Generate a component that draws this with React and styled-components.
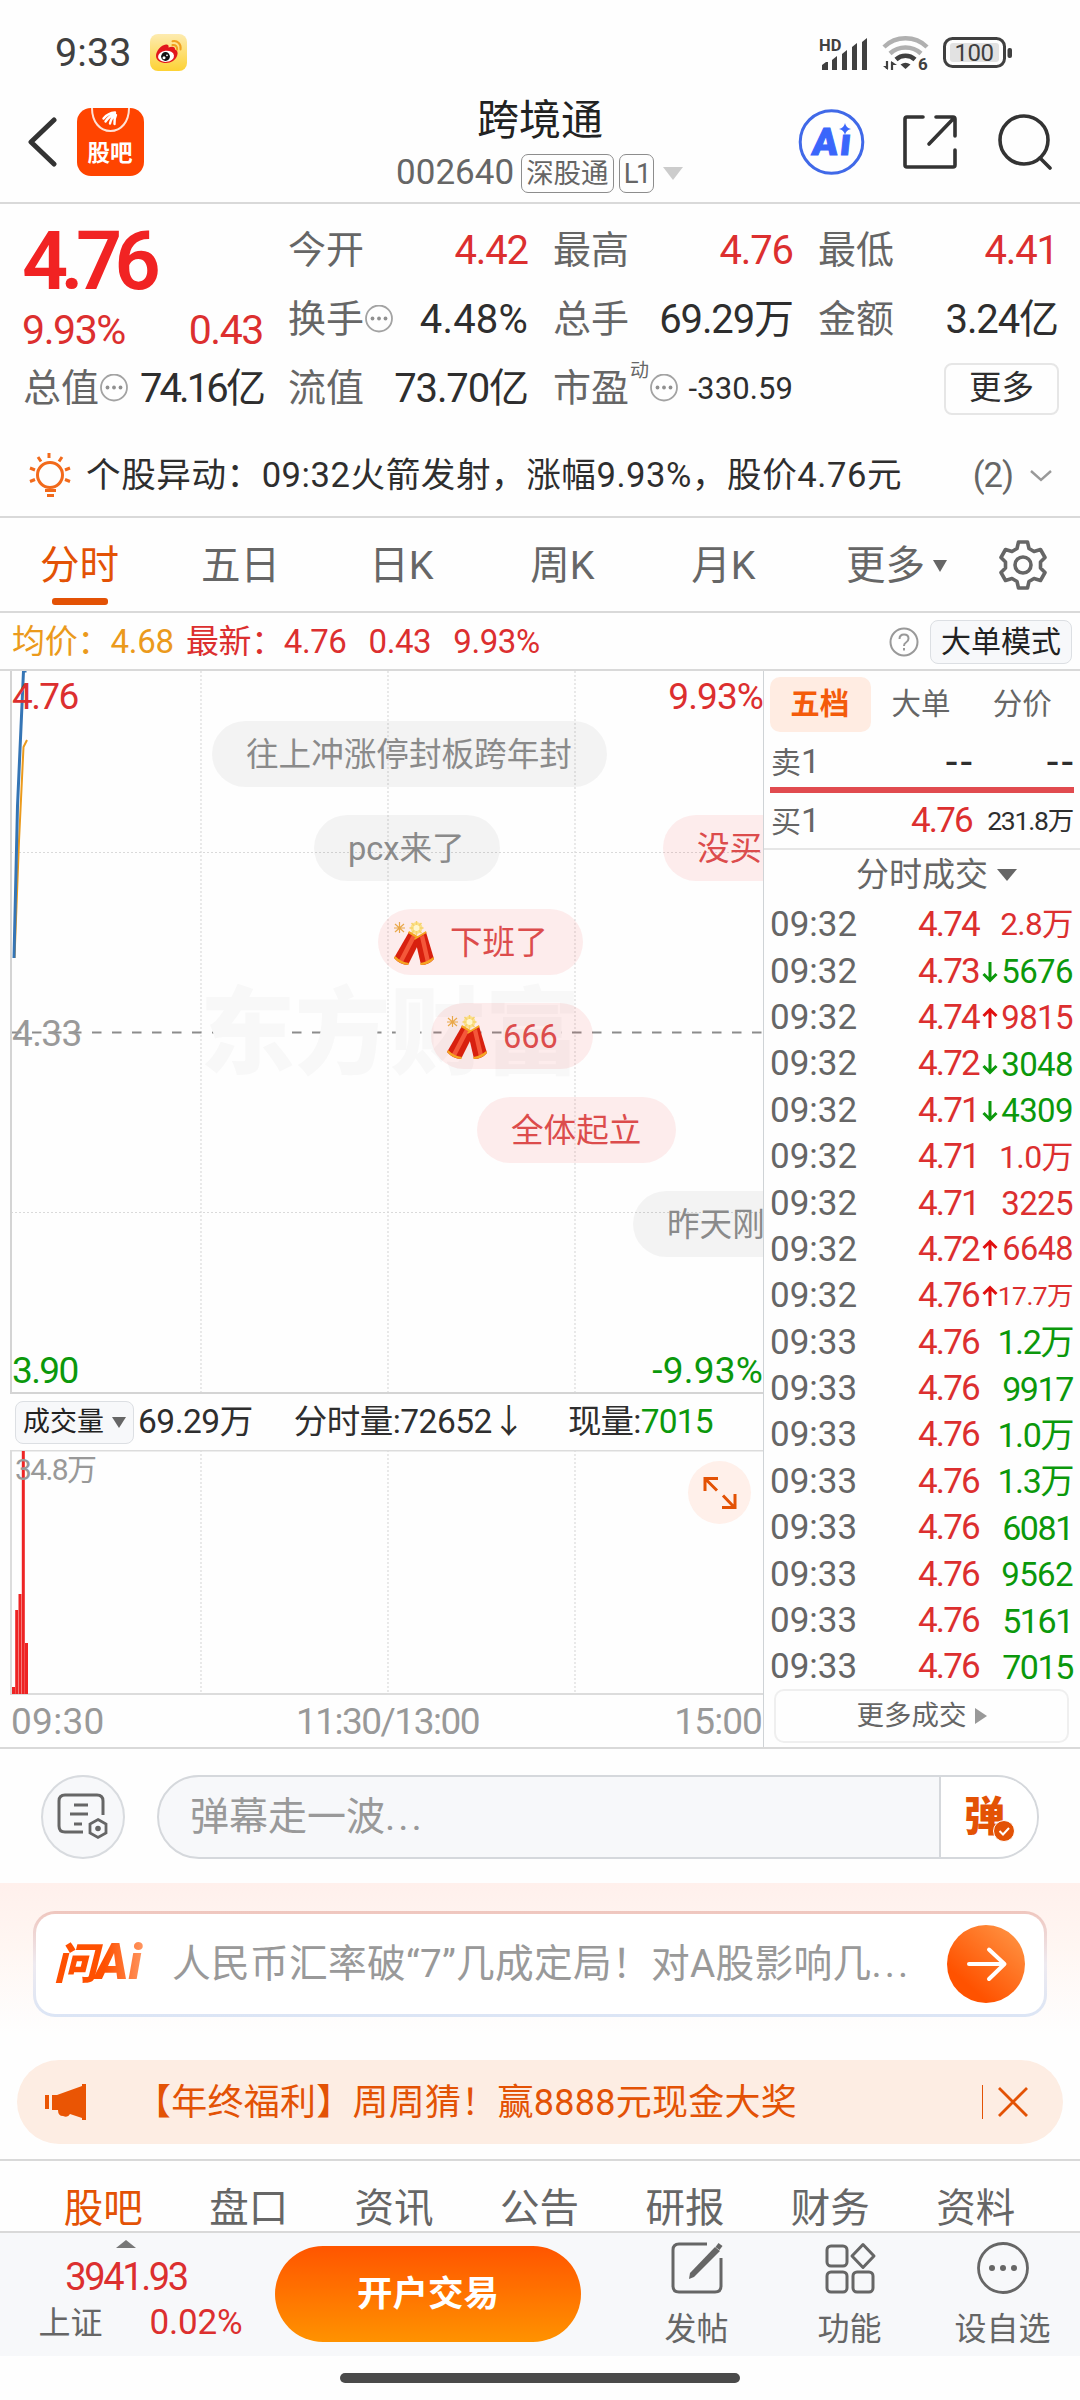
import React, { useState } from 'react';
import styled, { createGlobalStyle } from 'styled-components';

const red = '#dc2f2f';
const green = '#0b980b';
const orange = '#e35205';
const dark = '#2e2e2e';
const gray = '#666666';
const line = '#d9d9d9';

const GlobalStyle = createGlobalStyle`
    * { box-sizing: border-box; }

    body {
        margin: 0;
        background-color: #fff;
        font-family: Roboto, "Noto Sans CJK SC", sans-serif;
        line-height: 1.2;
        color: ${dark};
    }

    svg { display: block; flex-shrink: 0; }
`;

const Page = styled.main`
    display: flex;
    flex-direction: column;
    width: 1080px;
    height: 2400px;
    overflow: hidden;
    background-color: #fefefe;
    white-space: nowrap;
`;

const Text = styled.span`
    font-size: ${p => p.$size}px;
    color: ${p => p.$color || 'inherit'};
    letter-spacing: ${p => p.$ls || 0}px;
`;

const Dotted = styled.span`
    letter-spacing: 3px;
`;

/* status bar */

const StatusBar = styled.div`
    display: flex;
    align-items: center;
    height: 84px;
    padding: 21px 67px 0 55px;
    color: #404040;

    .weibo { margin-left: 18px; margin-right: auto; }
    .wifi { margin: 0 11px 0 12px; }
`;

/* header */

const Header = styled.header`
    display: grid;
    grid-template-columns: 282px 516px 282px;
    height: 120px;
    border-bottom: 2px solid ${line};
`;

const HeaderSide = styled.div`
    display: flex;
    align-items: center;
    padding: ${p => p.$right ? '0 27px 3px 0' : '0 0 3px 26px'};
    justify-content: ${p => p.$right ? 'space-between' : 'flex-start'};
    gap: 20px;

    .share { margin-right: 4px; }
`;

const TitleBlock = styled.div`
    display: flex;
    flex-direction: column;
    align-items: center;
    padding-top: 12px;
`;

const Title = styled.h1`
    margin: 0;
    font-size: 42px;
    line-height: 50px;
    font-weight: 400;
    color: #222;
`;

const CodeRow = styled.div`
    display: flex;
    align-items: center;
    height: 44px;
    margin-top: 5px;
    padding-right: 1px;
    color: ${gray};
`;

const Badge = styled.span`
    height: 39px;
    margin-left: 7px;
    padding: 0 4px;
    border: 1.5px solid #8d8d8d;
    border-radius: 7px;
    font-size: 27.5px;
    line-height: 37px;
    letter-spacing: ${p => p.$ls || 0}px;

    & + & { margin-left: 5px; }
`;

const Triangle = styled.i`
    width: 0;
    height: 0;
    margin-left: ${p => p.$ml || 0}px;
    border-style: solid;
    border-color: transparent;
    border-width: ${p => p.$right ? `${p.$w / 2}px 0 ${p.$w / 2}px ${p.$h}px` : `${p.$h}px ${p.$w / 2}px 0`};
    ${p => p.$right ? 'border-left-color' : 'border-top-color'}: ${p => p.$color || gray};
    transform: ${p => p.$up ? 'rotate(180deg)' : 'none'};
`;

/* quote */

const Quote = styled.section`
    display: grid;
    grid-template-columns: 240px 240px 240px 240px;
    grid-template-rows: repeat(3, 69px);
    column-gap: 25px;
    padding: 12px 0 0 23px;
`;

const PriceCell = styled.div`
    grid-row: span 2;
    display: flex;
    flex-direction: column;
    color: ${red};
`;

const BigPrice = styled.strong`
    margin: 10px 0 0 -1px;
    height: 71px;
    font-size: 81px;
    line-height: 71px;
    letter-spacing: -7.7px;
    font-weight: 600;
    color: #f12323;
`;

const Change = styled.div`
    display: flex;
    justify-content: space-between;
    margin: 13px 0 0 -1px;
    font-size: 41px;
    line-height: 40px;
    letter-spacing: -1.4px;
`;

const Cell = styled.div`
    display: flex;
    align-items: center;
    justify-content: ${p => p.$end ? 'flex-end' : 'flex-start'};
    font-size: 40px;
    letter-spacing: ${p => p.$ls || -1.1}px;
    color: ${p => p.$color || dark};

    > b {
        font-size: 38px;
        font-weight: 400;
        letter-spacing: 0;
        color: ${gray};
    }

    > sup {
        align-self: flex-start;
        margin: 4px 0 0 1px;
        font-size: 19px;
        letter-spacing: 0;
        line-height: 26px;
        color: ${gray};
    }

    > span { margin-left: auto; }
`;

const MoreButton = styled.button`
    width: 115px;
    height: 52px;
    margin-right: -1px;
    padding: 0;
    border: 2px solid #e6e6e6;
    border-radius: 8px;
    background: none;
    font: inherit;
    font-size: 32.5px;
    letter-spacing: 0;
    color: ${dark};
`;

const Alert = styled.section`
    display: flex;
    align-items: center;
    height: 95px;
    padding: 12px 28px 0 28px;
    border-bottom: 2px solid ${line};
    font-size: 34.6px;
    letter-spacing: 0.55px;

    p { margin: 0 auto 0 14px; }
    span { color: ${gray}; margin-right: 17px; }
`;

/* tabs */

const Tabs = styled.nav`
    display: flex;
    height: 95px;
    border-bottom: 2px solid ${line};
`;

const Tab = styled.button`
    position: relative;
    display: flex;
    align-items: center;
    justify-content: center;
    width: ${p => p.$w || 161}px;
    padding: 2px 2px 0 0;
    border: none;
    background: none;
    font: inherit;
    font-size: 39.5px;
    color: ${p => p.$active ? orange : gray};

    &::after {
        content: "";
        display: ${p => p.$active ? 'block' : 'none'};
        position: absolute;
        bottom: 6px;
        width: 56px;
        height: 7px;
        border-radius: 3px;
        background-color: ${orange};
    }
`;

const InfoBar = styled.div`
    display: flex;
    align-items: center;
    height: 58px;
    padding: 2px 8px 0 12px;
    border-bottom: 2px solid ${line};
    font-size: 33px;
    letter-spacing: -0.2px;
    color: ${red};

    .avg { color: #eb9a1c; margin-right: 12px; }
    .price { letter-spacing: -0.4px; }
    .gap { margin-left: 22px; letter-spacing: -0.4px; }
    svg { margin: 0 11px 0 auto; }
`;

const SmallButton = styled.button`
    display: flex;
    align-items: center;
    justify-content: center;
    flex-shrink: 0;
    width: ${p => p.$w}px;
    height: ${p => p.$h}px;
    padding: 0;
    border: 1.5px solid #dcdfe3;
    border-radius: 8px;
    background-color: #f7f8fa;
    font: inherit;
    font-size: ${p => p.$size}px;
    letter-spacing: 0;
    color: #222;
`;

/* charts */

const Body = styled.section`
    display: grid;
    grid-template-columns: 764px 316px;
    height: 1078px;
    border-bottom: 2px solid ${line};
`;

const Charts = styled.div`
    display: flex;
    flex-direction: column;
    border-right: 1.5px solid #cfd3d6;
`;

const PriceChart = styled.div`
    position: relative;
    height: 723px;
    overflow: hidden;
`;

const Label = styled.span`
    position: absolute;
    ${p => p.$right ? 'right: 0' : `left: ${p.$left || 12}px`};
    top: ${p => p.$top}px;
    font-size: ${p => p.$size || 37}px;
    line-height: 40px;
    letter-spacing: ${p => p.$ls || -1.6}px;
    color: ${p => p.$color};
`;

const Watermark = styled.span`
    position: absolute;
    left: 200px;
    top: 307px;
    font-size: 95px;
    line-height: 114px;
    font-weight: 900;
    color: #f8f8f8;
`;

const Bullet = styled.div`
    position: absolute;
    left: ${p => p.$x}px;
    top: ${p => 50 + p.$row * 94}px;
    display: flex;
    align-items: center;
    height: 66px;
    padding: 3px ${p => p.$cracker ? '35px 0 13px' : '35px 0 34px'};
    border-radius: 33px;
    background-color: ${p => p.$hot ? 'rgba(240, 60, 60, 0.095)' : 'rgba(0, 0, 0, 0.045)'};
    color: ${p => p.$hot ? '#dc4c4c' : '#8a8a8a'};
    font-size: 32.6px;

    svg { margin-right: 15px; }
`;

const VolumeBar = styled.div`
    display: flex;
    align-items: center;
    height: 56px;
    padding: 0 0 0 15px;
    font-size: 33.5px;
    letter-spacing: -0.5px;

    em { font-style: normal; color: ${green}; }
    .total { margin-left: 4px; }
    .minute { margin-left: 41px; }
    .now { margin-left: 43px; letter-spacing: -0.8px; }
`;

const VolumeChart = styled.div`
    position: relative;
    height: 244px;
`;

const ExpandButton = styled.button`
    position: absolute;
    right: 12px;
    top: 11px;
    width: 63px;
    height: 63px;
    padding: 0;
    border: none;
    border-radius: 50%;
    background-color: #fff0ea;
`;

const TimeAxis = styled.div`
    display: flex;
    justify-content: space-between;
    align-items: center;
    flex: 1;
    padding: 3px 1px 0 11px;
    font-size: 37px;
    letter-spacing: -0.9px;
    color: #999;

    > :first-child { letter-spacing: 0.3px; }
    > :nth-child(2) { margin-right: 4px; letter-spacing: -1.5px; }
`;

/* order book */

const Book = styled.div`
    display: flex;
    flex-direction: column;
    padding: 6px 6px 0;
`;

const BookTabs = styled.div`
    display: grid;
    grid-template-columns: repeat(3, 1fr);
    height: 55px;
`;

const BookTab = styled.button`
    padding: 1px 2px 0 0;
    border: none;
    border-radius: 10px;
    background-color: ${p => p.$active ? '#ffece2' : 'transparent'};
    font: inherit;
    font-size: 29.5px;
    font-weight: ${p => p.$active ? 700 : 400};
    color: ${p => p.$active ? '#f45b0a' : gray};
`;

const Level = styled.div`
    display: grid;
    grid-template-columns: 1fr 90px 101px;
    align-items: center;
    height: 55px;
    padding: ${p => p.$top || 0}px 1px 0;
    font-size: 35px;
    text-align: right;

    > :first-child { text-align: left; font-size: 30px; color: ${gray}; }
    > :first-child b { font-size: 34px; font-weight: 400; }
    > .dash { margin-right: -3px; font-size: 42px; line-height: 30px; letter-spacing: 3px; }
`;

const Pressure = styled.div`
    height: 6px;
    background-color: #e14b4f;
`;

const TradesTitle = styled.div`
    display: flex;
    align-items: center;
    justify-content: center;
    height: 54px;
    margin: 0 -6px;
    padding: 0 0 2px 29px;
    border-top: 2px solid #e6e6e6;
    font-size: 33px;
    color: ${gray};
`;

const Trade = styled.div`
    display: grid;
    grid-template-columns: 1fr 90px 20px 74px;
    align-items: center;
    height: 46.4px;
    font-size: 35px;
    letter-spacing: 0;
    color: ${gray};

    .price { margin-right: 1px; text-align: right; color: ${red}; letter-spacing: -1.8px; }
    svg { justify-self: center; }
`;

const Amount = styled.span`
    grid-column: 4;
    justify-self: end;
    margin-right: 1px;
    font-size: ${p => p.$size || 34}px;
    letter-spacing: ${p => p.$size ? -0.6 : -1.4}px;
    color: ${p => p.$up ? red : green};
`;

const MoreTrades = styled.button`
    display: flex;
    align-items: center;
    justify-content: center;
    height: 54px;
    margin: -2px 5px 0 4px;
    padding: 0;
    border: 2px solid #efefef;
    border-radius: 10px;
    background: none;
    font: inherit;
    font-size: 27.5px;
    color: ${gray};
`;

/* comment input */

const CommentRow = styled.div`
    display: flex;
    align-items: center;
    gap: 32px;
    height: 134px;
    padding: 1px 41px 0;
`;

const RoundButton = styled.button`
    display: flex;
    align-items: center;
    justify-content: center;
    width: 84px;
    height: 84px;
    padding: 0;
    border: 2px solid #d8dbdf;
    border-radius: 50%;
    background-color: #f7f8fa;
`;

const CommentBox = styled.div`
    display: flex;
    flex: 1;
    height: 84px;
    border: 2px solid #d5d8dc;
    border-radius: 42px;
    overflow: hidden;
    background-color: #f7f8fa;
    font-size: 39px;
    line-height: 80px;
    color: #999;

    > span { flex: 1; padding-left: 31px; }
`;

const BulletSwitch = styled.div`
    display: flex;
    align-items: center;
    width: 98px;
    padding-left: 23px;
    border-left: 2px solid #d5d8dc;
    background-color: #fff;
    color: ${orange};
    font-size: 41px;
    font-weight: 900;

    svg { margin: 28px 0 0 -12px; }
`;

/* AI search */

const AskSection = styled.section`
    height: 177px;
    padding: 28px 33px;
    background: linear-gradient(#fff0ec, #fff6f2 35%, #fefefe 85%);
`;

const AskCard = styled.div`
    display: flex;
    align-items: center;
    height: 106px;
    padding: 0 19px 0 18px;
    border: 3px solid transparent;
    border-radius: 22px;
    background: linear-gradient(#fff, #fff) padding-box, linear-gradient(#efc6be, #eeeaf0 50%, #dbe5f5) border-box;
    font-size: 38.7px;
    letter-spacing: 0.3px;
    color: #999;

    p { margin: 0 auto 0 26px; }
`;

const AskLogo = styled.span`
    width: 92px;
    font-size: 43px;
    font-weight: 900;
    font-style: italic;
    letter-spacing: -1.5px;
    line-height: 60px;
    background: linear-gradient(90deg, #ff5000 55%, #ff9a66);
    background-clip: text;
    color: transparent;

    b { font-size: 50px; line-height: 40px; letter-spacing: 0; }
`;

/* promo banner */

const Banner = styled.div`
    display: flex;
    align-items: center;
    height: 84px;
    margin: 0 17px 15px;
    padding: 0 35px 0 27px;
    border-radius: 42px;
    background-color: #fdede3;
    font-size: 36px;
    letter-spacing: 0.25px;
    color: ${orange};

    p { margin: 0 auto 0 48px; padding-top: 3px; }
    i { width: 1.5px; height: 34px; margin-right: 15px; background-color: ${orange}; }
`;

const SectionTabs = styled.nav`
    display: grid;
    grid-template-columns: repeat(7, 145.4px);
    justify-content: center;
    height: 72px;
    padding-top: 22px;
    border-top: 2px solid ${line};

    ${Tab} { width: auto; padding: 2px 1px 0 0; }
    ${Tab}::after { display: none; }
`;

/* bottom bar */

const BottomBar = styled.footer`
    display: flex;
    height: 125px;
    border-top: 2px solid ${line};
    background-color: #f7f8fa;
`;

const IndexBox = styled.div`
    display: flex;
    flex-direction: column;
    align-items: center;
    width: 275px;
    padding: 7px 23px 0 0;
    color: ${red};

    > strong { margin-top: 9px; font-size: 38px; line-height: 40px; font-weight: 400; letter-spacing: -2.4px; }
    > div { display: flex; align-items: center; margin: 0 0 0 29px; font-size: 35px; line-height: 52px; letter-spacing: -0.2px; }
    > div span { margin-right: 47px; font-size: 32px; letter-spacing: 0; color: ${gray}; }
`;

const OpenButton = styled.button`
    width: 306px;
    height: 96px;
    margin: 13px 39px 0 0;
    padding: 0;
    border: none;
    border-radius: 48px;
    background: linear-gradient(#ff5500, #ff9200);
    font: inherit;
    font-size: 35.5px;
    font-weight: 700;
    color: #fff;
`;

const Action = styled.div`
    display: flex;
    flex-direction: column;
    align-items: center;
    width: 153px;
    padding-top: 8px;
    font-size: 32px;
    line-height: 40px;
    color: ${gray};

    svg { margin-bottom: 14px; }
`;

const HomeBar = styled.div`
    width: 400px;
    height: 10px;
    margin: 17px auto 0;
    border-radius: 5px;
    background-color: #4a4a4a;
`;

const TRADES = [
    ['09:32', '4.74', '', '2.8万', true, 31.5],
    ['09:32', '4.73', 'down', '5676', false, 33],
    ['09:32', '4.74', 'up', '9815', true, 33],
    ['09:32', '4.72', 'down', '3048', false, 33],
    ['09:32', '4.71', 'down', '4309', false, 33],
    ['09:32', '4.71', '', '1.0万', true, 32],
    ['09:32', '4.71', '', '3225', true, 33],
    ['09:32', '4.72', 'up', '6648', true, 32.5],
    ['09:32', '4.76', 'up', '17.7万', true, 26.5],
    ['09:33', '4.76', '', '1.2万', false],
    ['09:33', '4.76', '', '9917', false],
    ['09:33', '4.76', '', '1.0万', false],
    ['09:33', '4.76', '', '1.3万', false],
    ['09:33', '4.76', '', '6081', false],
    ['09:33', '4.76', '', '9562', false, 33],
    ['09:33', '4.76', '', '5161', false],
    ['09:33', '4.76', '', '7015', false],
];

const PERIODS = ['分时', '五日', '日K', '周K', '月K'];
const SECTIONS = ['股吧', '盘口', '资讯', '公告', '研报', '财务', '资料'];

// x, top of every volume bar; they all stand on the same baseline
const VOLUMES = [[12, 237], [15.2, 160], [18.5, 144], [21.8, 1], [25, 193]];

function Weibo() {
    return (
        <svg className="weibo" width="37" height="37" viewBox="0 0 37 37">
            <defs>
                <linearGradient id="wb" x1="0" y1="0" x2="0" y2="1">
                    <stop offset="0" stopColor="#fdebb0" />
                    <stop offset="1" stopColor="#fdd234" />
                </linearGradient>
            </defs>
            <rect width="37" height="37" rx="8" fill="url(#wb)" />
            <path d="M6 22c0-5 5-11 10-11.500 2-.2 3 1 2.500 3 3-1.300 7-1.300 6.500 2 2.500.8 3.200 3 2.200 6C26 26 21 29 16 29S6 26.500 6 22z" fill="#e2161c" />
            <ellipse cx="16" cy="22.300" rx="8" ry="5.600" fill="#fff" transform="rotate(-6 16 22)" />
            <circle cx="15.500" cy="22.500" r="4.400" fill="#111" />
            <circle cx="14" cy="23.800" r="1.500" fill="#fff" />
            <circle cx="17" cy="21.300" r=".9" fill="#fff" />
            <path d="M22.500 11c3-.5 5 1.500 4.600 4.500M22.500 7.200c5-1 9 3 8 8.300" fill="none" stroke="#f0a020" strokeWidth="2" strokeLinecap="round" />
        </svg>
    );
}

function Signal() {
    return (
        <svg width="51" height="38" viewBox="0 -4 51 38" fill="#404040">
            <text x="0" y="12.500" fontSize="16.500" fontWeight="700" fontFamily="Roboto, sans-serif">HD</text>
            <path d="M3 27l4-3h2v8H3zM13 22l5-4v14h-5zM23 16l5-4v20h-5zM33 9l5-4v27h-5zM43 4l5-4v32h-5z" />
        </svg>
    );
}

function Wifi() {
    return (
        <svg className="wifi" width="50" height="40" viewBox="0 0 50 40" fill="none">
            <path d="M2 14a31 31 0 0 1 43 0" stroke="#b0b0b0" strokeWidth="4.500" />
            <path d="M8 20.500a23 23 0 0 1 31 0" stroke="#b0b0b0" strokeWidth="4.500" />
            <path d="M14 26.500a14 14 0 0 1 19 0" stroke="#404040" strokeWidth="4.500" />
            <path d="M18.500 31.500q5-3.500 10 0L23.500 36z" fill="#404040" />
            <path d="M5 28v8M10 37v-8" stroke="#404040" strokeWidth="2.200" />
            <path d="M1 33h5v4zM9 28l6 4H9z" fill="#404040" />
            <text x="36" y="36.500" fontSize="17" fontWeight="700" fontFamily="Roboto, sans-serif" fill="#404040">6</text>
        </svg>
    );
}

function Battery() {
    return (
        <svg width="70" height="32" viewBox="0 0 70 32">
            <rect x="1.500" y="1.500" width="60" height="28" rx="8" fill="none" stroke="#404040" strokeWidth="3" />
            <rect x="7" y="6" width="49" height="19" rx="3" fill="#e2e2e2" />
            <rect x="64.500" y="11" width="4.500" height="10" rx="2" fill="#404040" />
            <text x="31" y="24" textAnchor="middle" fontSize="24" letterSpacing="-.5" fontFamily="Roboto, sans-serif" fill="#404040">100</text>
        </svg>
    );
}

function BarIcon() {
    return (
        <svg width="67" height="68" viewBox="0 0 67 68">
            <rect width="67" height="68" rx="14" fill="#ff4400" />
            <path d="M15 0c0 14 8 23 18.500 23S52 14 52 0" fill="none" stroke="#ffe2d6" strokeWidth="2" />
            <path d="M26.500 10.500Q31 5 38 4.500M28.500 13.500Q32 8 38 6M33 15.500Q34 10 38.500 7M37.500 16Q37 11 39 7" fill="none" stroke="#fff" strokeWidth="2.400" strokeLinecap="round" />
            <text x="33" y="53" textAnchor="middle" fontSize="22.500" fontWeight="700" fontFamily="'Noto Sans CJK SC', sans-serif" fill="#fff">股吧</text>
        </svg>
    );
}

function AiIcon() {
    return (
        <svg width="67" height="68" viewBox="0 0 67 68">
            <circle cx="33.500" cy="34" r="31.300" fill="none" stroke="#4069e8" strokeWidth="3" />
            <text x="18" y="47" transform="skewX(-6)" fontSize="38" fontWeight="900" letterSpacing="2" stroke="#3a66fb" strokeWidth="1" fontFamily="Roboto, sans-serif" fill="#3a66fb">Aı</text>
            <path d="M47 15q1 5 6 6-5 1-6 6-1-5-6-6 5-1 6-6z" fill="#3a66fb" />
        </svg>
    );
}

function Dots() {
    return (
        <svg width="29" height="30" viewBox="0 0 29 30">
            <circle cx="15" cy="13.500" r="13" fill="none" stroke="#a3a3a3" strokeWidth="1.800" />
            <g fill="#909090">
                <circle cx="8.500" cy="13.500" r="1.900" />
                <circle cx="15" cy="13.500" r="1.900" />
                <circle cx="21.500" cy="13.500" r="1.900" />
            </g>
        </svg>
    );
}

function Bulb() {
    return (
        <svg width="44" height="46" viewBox="0 0 44 46" fill="none" stroke="#f26a1b" strokeWidth="3">
            <circle cx="22" cy="22" r="12.500" />
            <path d="M17 37.500h11M19 42.500h7M21 0v5M10 4l3 4.500M34 4l-3 4.500M2 15l5 2M42 15l-5 2M2 28.500l5-2M42 28.500l-5-2" />
        </svg>
    );
}

function Gear() {
    return (
        <svg width="50" height="52" viewBox="-1 1 50 52" fill="none" stroke={gray} strokeWidth="3.600" strokeLinejoin="round">
            <path d="M20.500 3h9l1.500 6.500 5 3 6.500-2 4.500 8-4.500 4.500v6l4.500 4.500-4.500 8-6.500-2-5 3-1.500 6.500h-9L19 42.500l-5-3-6.500 2-4.500-8L7.500 29v-6L3 18.500l4.500-8 6.500 2 5-3z" />
            <circle cx="25" cy="26" r="8" />
        </svg>
    );
}

function Cracker() {
    return (
        <svg width="44" height="46" viewBox="0 0 44 46">
            <g stroke="#e9a84a" strokeWidth="1.200">
                <path d="M4 3l9 8M13 3l-9 8M8.500 1v11M3 7h11" />
            </g>
            <circle cx="25.500" cy="7" r="6" fill="#fbe08a" />
            <path d="M25.500 0v14M18.500 7h14M20.500 2l10 10M30.500 2l-10 10" stroke="#f6d36b" strokeWidth="1.500" />
            <circle cx="25.500" cy="7" r="3" fill="#fff6cf" />
            <path d="M18 11l12 7-13 26q-8 0-14-7z" fill="#d8200f" />
            <path d="M21 14l4 2-13 25-4-2z" fill="#f4573a" />
            <path d="M3 37q5 6 14 7l1-2Q10 41 4 35zM17 12l12 7 1-2-12-7z" fill="#f5a623" />
            <path d="M24 18l11-7 8 27q-5 6-13 6z" fill="#d8200f" />
            <path d="M29 16l4-2 6 26-4 2z" fill="#f4573a" />
            <path d="M29.500 44q8 0 13.500-6l-.7-2q-6 5-13 6zM23.500 19l12-7-.5-2-11.500 7z" fill="#f5a623" />
        </svg>
    );
}

function Arrow({ dir }) {
    return (
        <svg width="18" height="24" viewBox="0 0 18 24" fill="none" stroke={dir === 'up' ? '#e00f0f' : green} strokeWidth="3">
            <path d={dir === 'up' ? 'M9 22V4M2.500 10L9 3.500 15.500 10' : 'M9 2v18M2.500 14L9 20.500 15.500 14'} />
        </svg>
    );
}

function Grid({ height, rows }) {
    return (
        <g fill="none" stroke="#dadada" strokeWidth="1.200" strokeDasharray="2 2">
            {[201, 388, 575].map(x => <path key={x} d={`M${x} 0V${height}`} />)}
            {rows.map(y => <path key={y} d={`M11 ${y}H763`} />)}
        </g>
    );
}

export default function App() {
    let [period, setPeriod] = useState('分时');
    let [section, setSection] = useState('股吧');

    return (
        <Page>
            <GlobalStyle />
            <StatusBar>
                <Text $size={39.5} $ls={0.1}>9:33</Text>
                <Weibo />
                <Signal />
                <Wifi />
                <Battery />
            </StatusBar>

            <Header>
                <HeaderSide>
                    <svg width="31" height="52" viewBox="0 0 31 52" fill="none" stroke="#333" strokeWidth="5" strokeLinecap="round" strokeLinejoin="round">
                        <path d="M28 4L5 26l23 22" />
                    </svg>
                    <BarIcon />
                </HeaderSide>
                <TitleBlock>
                    <Title>跨境通</Title>
                    <CodeRow>
                        <Text $size={35}>002640</Text>
                        <Badge>深股通</Badge>
                        <Badge $ls={-2.5}>L1</Badge>
                        <Triangle $w={21} $h={13} $ml={9} $color="#ccc" />
                    </CodeRow>
                </TitleBlock>
                <HeaderSide $right>
                    <AiIcon />
                    <svg className="share" width="54" height="54" viewBox="0 0 54 54" fill="none" stroke="#333" strokeWidth="3.600" strokeLinecap="round" strokeLinejoin="round">
                        <path d="M20 2H4q-2 0-2 2v46q0 2 2 2h46q2 0 2-2V35M33 2h17q2 0 2 2v17M51 3L26 29" />
                    </svg>
                    <svg width="55" height="56" viewBox="0 0 55 56" fill="none" stroke="#333" strokeWidth="3.600" strokeLinecap="round">
                        <circle cx="26" cy="26" r="24" />
                        <path d="M42 44l10 10" />
                    </svg>
                </HeaderSide>
            </Header>

            <Quote>
                <PriceCell>
                    <BigPrice>4.76</BigPrice>
                    <Change><span>9.93%</span><span>0.43</span></Change>
                </PriceCell>
                <Cell $color={red}><b>今开</b><span>4.42</span></Cell>
                <Cell $color={red}><b>最高</b><span>4.76</span></Cell>
                <Cell $color={red}><b>最低</b><span>4.41</span></Cell>
                <Cell $ls={0.2}><b>换手</b><Dots /><span>4.48%</span></Cell>
                <Cell><b>总手</b><span>69.29万</span></Cell>
                <Cell><b>金额</b><span>3.24亿</span></Cell>
                <Cell $ls={-2.9}><b>总值</b><Dots /><span>74.16亿</span></Cell>
                <Cell><b>流值</b><span>73.70亿</span></Cell>
                <Cell><b>市盈</b><sup>动</sup><Dots /><Text $size={31} $ls={0.1}>-330.59</Text></Cell>
                <Cell $end><MoreButton>更多</MoreButton></Cell>
            </Quote>

            <Alert>
                <Bulb />
                <p>个股异动：09:32火箭发射，涨幅9.93%，股价4.76元</p>
                <Text $ls={-1}>(2)</Text>
                <svg width="22" height="12" viewBox="0 0 22 12" fill="none" stroke="#999" strokeWidth="2.400"><path d="M1 1l10 9L21 1" /></svg>
            </Alert>

            <Tabs>
                {PERIODS.map(name => (
                    <Tab key={name} $active={name === period} onClick={() => setPeriod(name)}>{name}</Tab>
                ))}
                <Tab $w={185}>更多<Triangle $w={15} $h={12} $ml={8} /></Tab>
                <Tab $w={66}><Gear /></Tab>
            </Tabs>

            <InfoBar>
                <span className="avg">均价：4.68</span>
                <span className="price">最新：4.76</span>
                <span className="gap">0.43</span>
                <span className="gap">9.93%</span>
                <svg width="30" height="30" viewBox="0 0 30 30" fill="none" stroke="#999" strokeWidth="2">
                    <circle cx="15" cy="15" r="13.500" />
                    <path d="M10.500 12q0-4.500 4.500-4.500t4.500 4q0 2.500-2.500 4-2 1.200-2 3.500M15 21v2.500" />
                </svg>
                <SmallButton $w={142} $h={44} $size={30}>大单模式</SmallButton>
            </InfoBar>

            <Body>
                <Charts>
                    <PriceChart>
                        <Watermark>东方财富</Watermark>
                        <svg width="763" height="723" viewBox="0 0 763 723" fill="none">
                            <Grid height={723} rows={[181.5, 541.5]} />
                            <path d="M11 0V722H763" stroke="#d4d4d4" strokeWidth="2" />
                            <path d="M12 361.500H763" stroke="#8c8c8c" strokeWidth="2" strokeDasharray="9.500 10.500" />
                            <path d="M14.500 287L19 170l4.500-94 3.500-7" stroke="#eb9a1c" strokeWidth="2" />
                            <path d="M14 287L17.500 135 23.500 0h3" stroke="#3575b5" strokeWidth="3" />
                        </svg>
                        <Label $top={6} $color={red}>4.76</Label>
                        <Label $top={6} $color={red} $right $ls={-0.9}>9.93%</Label>
                        <Label $top={343} $color="#999" $ls={-0.6}>4.33</Label>
                        <Label $top={680} $color={green}>3.90</Label>
                        <Label $top={680} $color={green} $right $ls={0.2}>-9.93%</Label>
                        <Bullet $x={212} $row={0}>往上冲涨停封板跨年封</Bullet>
                        <Bullet $x={314} $row={1}>pcx来了</Bullet>
                        <Bullet $x={663} $row={1} $hot>没买到</Bullet>
                        <Bullet $x={378} $row={2} $hot $cracker><Cracker />下班了</Bullet>
                        <Bullet $x={431} $row={3} $hot $cracker><Cracker />666</Bullet>
                        <Bullet $x={477} $row={4} $hot>全体起立</Bullet>
                        <Bullet $x={633} $row={5}>昨天刚</Bullet>
                    </PriceChart>
                    <VolumeBar>
                        <SmallButton $w={119} $h={43} $size={27}>成交量<Triangle $w={14} $h={11} $ml={8} /></SmallButton>
                        <span className="total">69.29万</span>
                        <span className="minute">分时量:72652↓</span>
                        <span className="now">现量:<em>7015</em></span>
                    </VolumeBar>
                    <VolumeChart>
                        <svg width="763" height="245" viewBox="0 0 763 245" fill="none">
                            <Grid height={244} rows={[]} />
                            <path d="M763 .5H11V244H763" stroke="#dcdcdc" strokeWidth="2" />
                            {VOLUMES.map(([x, y]) => (
                                <rect key={x} x={x} y={y} width="3" height={244 - y} fill="#ee2424" />
                            ))}
                        </svg>
                        <Label $top={0} $left={15} $size={30} $color="#999">34.8万</Label>
                        <ExpandButton>
                            <svg width="63" height="63" viewBox="0 0 63 63" fill="none" stroke={orange} strokeWidth="3">
                                <path d="M17 30V17.500H30M17.500 18L29 29.500M47 33V46.500H34M46 46L35 34.500" />
                            </svg>
                        </ExpandButton>
                    </VolumeChart>
                    <TimeAxis><span>09:30</span><span>11:30/13:00</span><span>15:00</span></TimeAxis>
                </Charts>

                <Book>
                    <BookTabs>
                        <BookTab $active>五档</BookTab>
                        <BookTab>大单</BookTab>
                        <BookTab>分价</BookTab>
                    </BookTabs>
                    <Level $top={4}>
                        <span>卖<b>1</b></span><span className="dash">--</span><span className="dash">--</span>
                    </Level>
                    <Pressure />
                    <Level>
                        <span>买<b>1</b></span>
                        <Text $size={35} $color={red} $ls={-1.8}>4.76</Text>
                        <Text $size={26.5} $ls={-1.2}>231.8万</Text>
                    </Level>
                    <TradesTitle>分时成交<Triangle $w={20} $h={12} $ml={9} /></TradesTitle>
                    {TRADES.map(([time, price, dir, amount, up, size], i) => (
                        <Trade key={i}>
                            <span>{time}</span>
                            <span className="price">{price}</span>
                            {dir && <Arrow dir={dir} />}
                            <Amount $up={up} $size={size}>{amount}</Amount>
                        </Trade>
                    ))}
                    <MoreTrades>更多成交<Triangle $right $w={16} $h={12} $ml={8} $color="#999" /></MoreTrades>
                </Book>
            </Body>

            <CommentRow>
                <RoundButton>
                    <svg width="54" height="50" viewBox="0 0 54 50" fill="none" stroke={gray} strokeWidth="3">
                        <path d="M27 40H9q-6 0-6-6V9q0-6 6-6h32q6 0 6 6v14M18 13h14M14 22h18M18 32h8" />
                        <path d="M42 27.500l8 4.500v9l-8 4.500-8-4.500v-9z" strokeWidth="2.800" />
                        <circle cx="42" cy="36.500" r="2.800" fill={gray} stroke="none" />
                    </svg>
                </RoundButton>
                <CommentBox>
                    <span>弹幕走一波<Dotted>...</Dotted></span>
                    <BulletSwitch>
                        弹
                        <svg width="22" height="22" viewBox="0 0 22 22" fill="none">
                            <circle cx="11" cy="11" r="10.500" fill={orange} stroke="#fff" />
                            <path d="M6.500 11l3.500 3.500L16 8" stroke="#fff" strokeWidth="2" />
                        </svg>
                    </BulletSwitch>
                </CommentBox>
            </CommentRow>

            <AskSection>
                <AskCard>
                    <AskLogo>问<b>Ai</b></AskLogo>
                    <p>人民币汇率破“7”几成定局！对A股影响几<Dotted>...</Dotted></p>
                    <svg width="78" height="78" viewBox="0 0 78 78" fill="none">
                        <defs>
                            <linearGradient id="go" x1="1" y1="0" x2="0.300" y2="0.800">
                                <stop offset="0" stopColor="#ff9a4a" />
                                <stop offset="1" stopColor="#ff5200" />
                            </linearGradient>
                        </defs>
                        <circle cx="39" cy="39" r="39" fill="url(#go)" />
                        <path d="M22 39h35M42 24.500L57.500 39 42 54" stroke="#fff" strokeWidth="4" strokeLinecap="round" strokeLinejoin="round" />
                    </svg>
                </AskCard>
            </AskSection>

            <Banner>
                <svg width="43" height="38" viewBox="0 0 43 38" fill="#ea5504">
                    <path d="M1 12h4v14H1zM8 12h5L38 3V1h4v36h-4v-2l-12-4q-2 4-7 2-5 0-5-6H8z" />
                </svg>
                <p>【年终福利】周周猜！赢8888元现金大奖</p>
                <i />
                <svg width="30" height="30" viewBox="0 0 30 30" stroke={orange} strokeWidth="2.800"><path d="M1 1l28 28M29 1L1 29" /></svg>
            </Banner>

            <SectionTabs>
                {SECTIONS.map(name => (
                    <Tab key={name} $active={name === section} onClick={() => setSection(name)}>{name}</Tab>
                ))}
            </SectionTabs>

            <BottomBar>
                <IndexBox>
                    <Triangle $up $w={20} $h={8} $color="#777" />
                    <strong>3941.93</strong>
                    <div><span>上证</span>0.02%</div>
                </IndexBox>
                <OpenButton>开户交易</OpenButton>
                <Action>
                    <svg width="54" height="54" viewBox="0 0 54 54" fill="none" stroke={gray} strokeWidth="3">
                        <path d="M37 3H9Q3 3 3 9v36q0 6 6 6h36q6 0 6-6V17" />
                        <path d="M45 6l5 4-26 26-5 2 1-6z" fill={gray} stroke="none" />
                        <path d="M47 4l4 3" strokeWidth="5" />
                    </svg>
                    发帖
                </Action>
                <Action>
                    <svg width="54" height="54" viewBox="0 0 54 54" fill="none" stroke={gray} strokeWidth="3">
                        <rect x="4" y="5" width="20" height="20" rx="4" />
                        <rect x="4" y="31" width="20" height="20" rx="4" />
                        <rect x="30" y="31" width="20" height="20" rx="4" />
                        <path d="M40 3.500L51 15 40 26.500 29 15z" strokeLinejoin="round" />
                    </svg>
                    功能
                </Action>
                <Action>
                    <svg width="54" height="54" viewBox="0 0 54 54" fill="none" stroke={gray} strokeWidth="2.800">
                        <circle cx="27" cy="27" r="24.500" />
                        <g fill={gray} stroke="none">
                            <circle cx="16" cy="27" r="3" />
                            <circle cx="27" cy="27" r="3" />
                            <circle cx="38" cy="27" r="3" />
                        </g>
                    </svg>
                    设自选
                </Action>
            </BottomBar>
            <HomeBar />
        </Page>
    );
}
